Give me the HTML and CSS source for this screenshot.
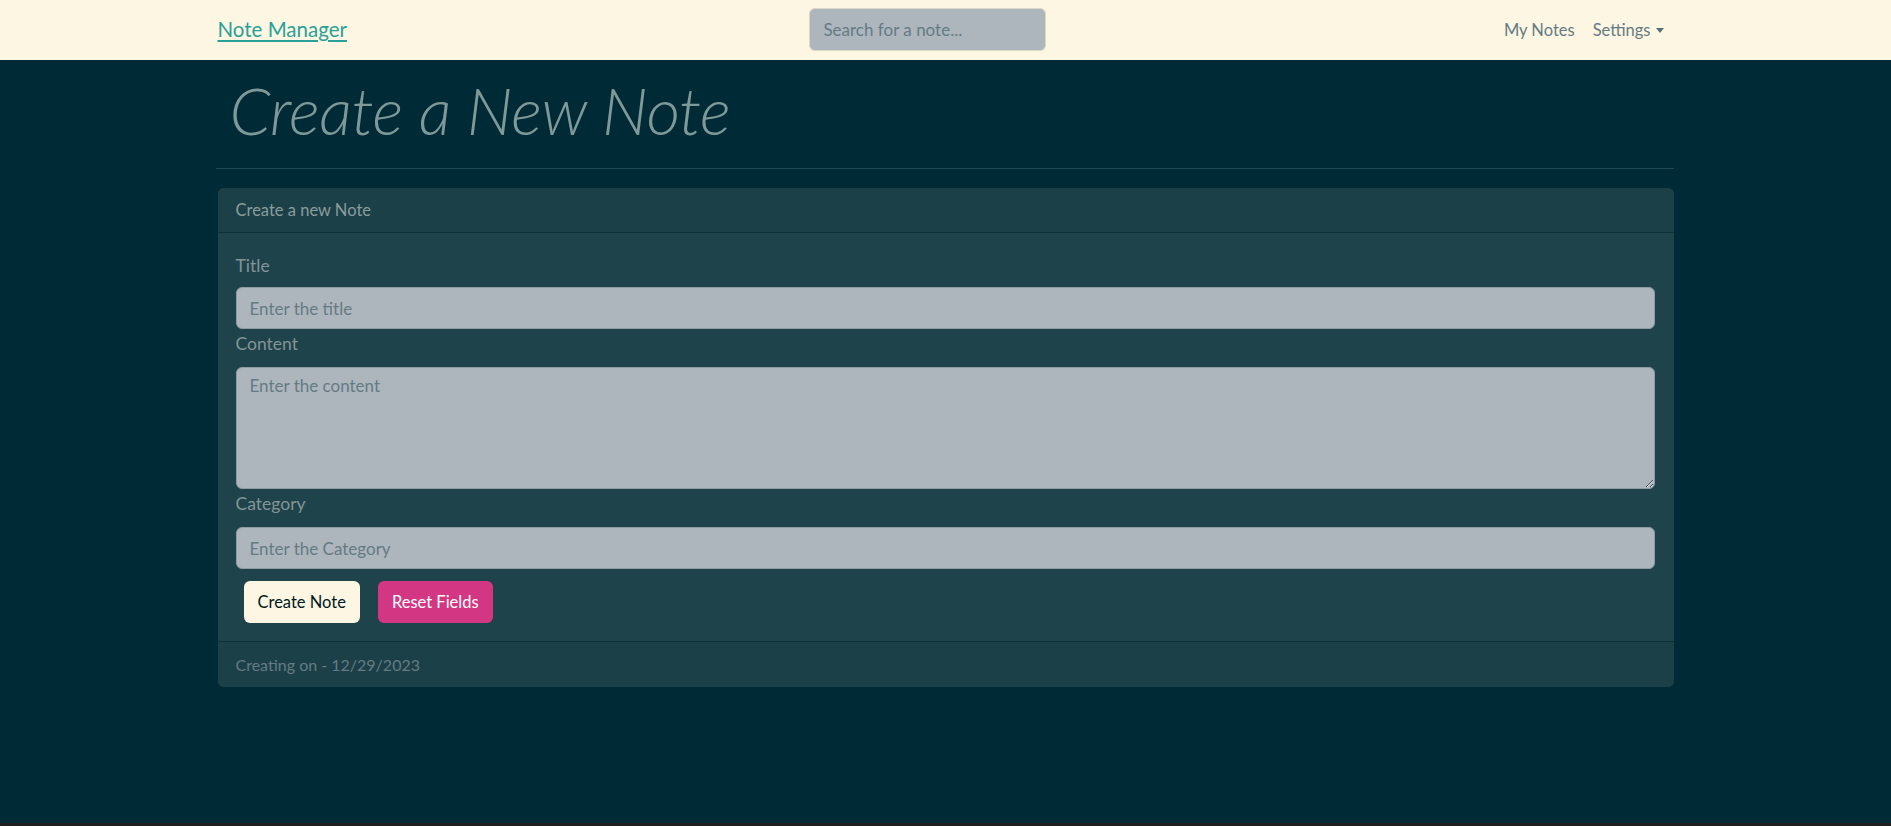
FILE: index.html
```html
<!DOCTYPE html>
<html lang="en">
<head>
<meta charset="utf-8">
<title>Note Manager</title>
<link rel="stylesheet" href="styles.css">
</head>
<body>
<nav class="navbar">
  <div class="container nav-inner">
    <a class="brand" href="#">Note Manager</a>
    <form class="search-form">
      <input class="search-input" type="search" placeholder="Search for a note...">
    </form>
    <ul class="nav-links">
      <li><a class="nav-link" href="#">My Notes</a></li>
      <li><a class="nav-link" href="#">Settings<span class="caret"></span></a></li>
    </ul>
  </div>
</nav>
<main class="container">
  <h1 class="page-title">Create a New Note</h1>
  <hr class="divider">
  <section class="card">
    <div class="card-header">Create a new Note</div>
    <div class="card-body">
      <label class="field-label" for="title">Title</label>
      <input class="field" id="title" type="text" placeholder="Enter the title">
      <label class="field-label" for="content">Content</label>
      <textarea class="field field-area" id="content" placeholder="Enter the content"></textarea>
      <label class="field-label" for="category">Category</label>
      <input class="field" id="category" type="text" placeholder="Enter the Category">
      <div class="actions">
        <button class="btn btn-light" type="button">Create Note</button>
        <button class="btn btn-pink" type="button">Reset Fields</button>
      </div>
    </div>
    <div class="card-footer">Creating on - 12/29/2023</div>
  </section>
</main>
</body>
</html>
```
FILE: styles.css
```css
html {
  background: #1f1f1f;
}
body {
  margin: 0;
  min-height: calc(100vh - 3px);
  background: #002b36;
  font-family: "Lato", "Open Sans", sans-serif;
  font-size: 17px;
  color: #839496;
}
.container {
  width: 1456px;
  margin: 0 auto;
}
.navbar {
  background: #fdf6e3;
  height: 60px;
}
.nav-inner {
  height: 60px;
  display: flex;
  align-items: center;
}
.brand {
  color: #2aa198;
  font-size: 20.5px;
  text-decoration: underline;
  text-underline-offset: 3px;
  text-decoration-thickness: 2px;
  margin-top: -3px;
}
.search-form {
  margin: 0 auto;
  padding-left: 14px;
}
.search-input {
  box-sizing: border-box;
  width: 237px;
  height: 43px;
  margin-top: -2px;
  padding: 0 13px;
  background: #adb5bd;
  border: 1px solid #dcd6c4;
  border-radius: 6px;
  font-family: inherit;
  font-size: 17px;
  color: #002b36;
  outline: none;
}
.search-input::placeholder {
  color: #657b83;
}
.nav-links {
  list-style: none;
  display: flex;
  margin: 0;
  padding: 0;
}
.nav-link {
  display: flex;
  align-items: center;
  padding: 0 9px;
  color: #657b83;
  text-decoration: none;
  font-size: 16.5px;
}
.caret {
  display: inline-block;
  width: 0;
  height: 0;
  margin-left: 6px;
  border-left: 4.5px solid transparent;
  border-right: 4.5px solid transparent;
  border-top: 5px solid #586e75;
}
.page-title {
  margin: 0 0 14px;
  padding: 6px 0 0 12px;
  height: 88px;
  font-family: "Lato", sans-serif;
  font-weight: 300;
  font-style: italic;
  font-size: 65.5px;
  line-height: 88px;
  letter-spacing: -0.5px;
  color: #7f9898;
}
.divider {
  margin: 0 0 19px -2px;
  border: 0;
  border-top: 1px solid #1d4a50;
  height: 0;
}
.card {
  background: #1f434b;
  border-radius: 6px;
  overflow: hidden;
}
.card-header {
  background: #1b4048;
  height: 45px;
  box-sizing: border-box;
  padding: 0 18px;
  display: flex;
  align-items: center;
  border-bottom: 1px solid #0f3039;
  font-size: 16.5px;
  color: #8a9c9c;
}
.card-body {
  padding: 19px 19px 18px 18px;
  display: flex;
  flex-direction: column;
}
.field-label {
  display: block;
  line-height: 28px;
  margin-bottom: 7px;
  font-size: 17.5px;
  color: #839496;
}
.field + .field-label,
.field-area + .field-label {
  margin-top: 1px;
  margin-bottom: 9px;
}
.field {
  box-sizing: border-box;
  width: 100%;
  height: 42px;
  padding: 0 13px;
  background: #adb5bd;
  border: 1px solid #8f9aa3;
  border-radius: 6px;
  font-family: inherit;
  font-size: 17px;
  color: #002b36;
  outline: none;
}
.field::placeholder {
  color: #657b83;
}
.field-area {
  height: 122px;
  padding: 7px 13px;
  resize: vertical;
  display: block;
}
.actions {
  display: flex;
  margin-top: 12px;
}
.btn {
  height: 42px;
  padding: 0 14px;
  margin: 0 9px 0 8px;
  border: 0;
  border-radius: 6px;
  font-family: inherit;
  font-size: 16.5px;
  cursor: pointer;
}
.btn-light {
  background: #fdf6e3;
  color: #001a21;
}
.btn-pink {
  margin-left: 9px;
  background: #d33682;
  color: #ffffff;
}
.card-footer {
  background: #1b4048;
  height: 46px;
  box-sizing: border-box;
  padding: 0 18px;
  display: flex;
  align-items: center;
  border-top: 1px solid #0f3039;
  font-size: 16px;
  color: #657b83;
}
```
